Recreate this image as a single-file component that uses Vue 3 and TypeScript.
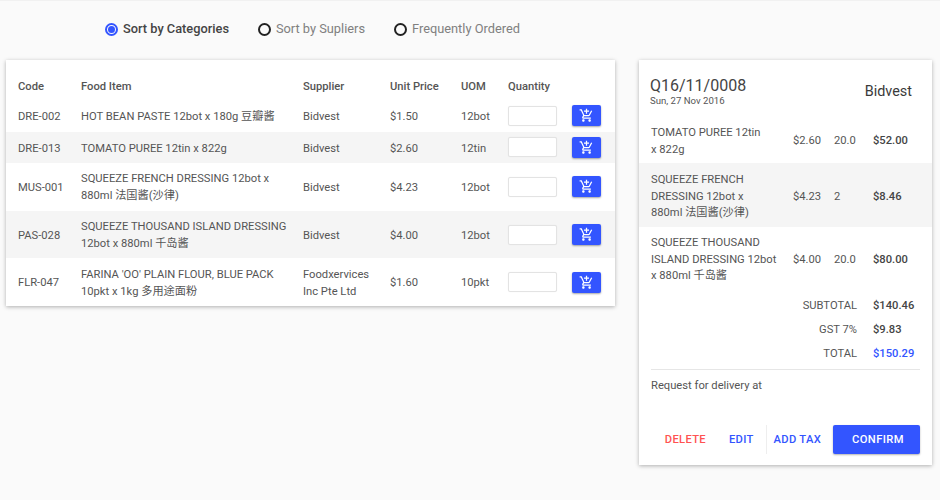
<script setup lang="ts">
interface Row { code: string; name: string[]; supplier: string[]; price: string; uom: string }
const rows: Row[] = [
  { code: 'DRE-002', name: ['HOT BEAN PASTE 12bot x 180g 豆瓣酱'], supplier: ['Bidvest'], price: '$1.50', uom: '12bot' },
  { code: 'DRE-013', name: ['TOMATO PUREE 12tin x 822g'], supplier: ['Bidvest'], price: '$2.60', uom: '12tin' },
  { code: 'MUS-001', name: ['SQUEEZE FRENCH DRESSING 12bot x', '880ml 法国酱(沙律)'], supplier: ['Bidvest'], price: '$4.23', uom: '12bot' },
  { code: 'PAS-028', name: ['SQUEEZE THOUSAND ISLAND DRESSING', '12bot x 880ml 千岛酱'], supplier: ['Bidvest'], price: '$4.00', uom: '12bot' },
  { code: 'FLR-047', name: ['FARINA \'OO\' PLAIN FLOUR, BLUE PACK', '10pkt x 1kg 多用途面粉'], supplier: ['Foodxervices', 'Inc Pte Ltd'], price: '$1.60', uom: '10pkt' },
]
const sorts = ['Sort by Categories', 'Sort by Supliers', 'Frequently Ordered']
const lines = [
  { name: ['TOMATO PUREE 12tin', 'x 822g'], price: '$2.60', qty: '20.0', total: '$52.00' },
  { name: ['SQUEEZE FRENCH', 'DRESSING 12bot x', '880ml 法国酱(沙律)'], price: '$4.23', qty: '2', total: '$8.46' },
  { name: ['SQUEEZE THOUSAND', 'ISLAND DRESSING 12bot', 'x 880ml 千岛酱'], price: '$4.00', qty: '20.0', total: '$80.00' },
]
</script>

<template>
  <div class="page">
    <div class="main">
      <div class="sorts">
        <label v-for="(s, i) in sorts" :key="s" class="sort" :class="{ on: i === 0 }">
          <span class="radio"><span v-if="i === 0" class="dot"></span></span>
          {{ s }}
        </label>
      </div>
      <div class="card table">
        <div class="row head">
          <span>Code</span><span>Food Item</span><span>Supplier</span><span>Unit Price</span><span>UOM</span><span>Quantity</span>
        </div>
        <div v-for="(r, i) in rows" :key="r.code" class="row" :class="{ alt: i % 2 === 1, tall: r.name.length > 1 }">
          <span class="cell">{{ r.code }}</span>
          <span class="cell"><span v-for="n in r.name" :key="n" class="ln">{{ n }}</span></span>
          <span class="cell"><span v-for="n in r.supplier" :key="n" class="ln">{{ n }}</span></span>
          <span class="cell">{{ r.price }}</span>
          <span class="cell">{{ r.uom }}</span>
          <span class="qty"></span>
          <button class="cart" type="button" aria-label="Add to cart">
            <svg width="15" height="15" viewBox="0 0 24 24" fill="#fff"><path d="M11 9h2V6h3V4h-3V1h-2v3H8v2h3v3zm-4 9c-1.1 0-1.99.9-1.99 2S5.9 22 7 22s2-.9 2-2-.9-2-2-2zm10 0c-1.1 0-1.99.9-1.99 2s.89 2 1.99 2 2-.9 2-2-.9-2-2-2zm-9.83-3.25l.03-.12.9-1.63h7.45c.75 0 1.41-.41 1.75-1.03l3.86-7.01L19.42 4h-.01l-1.1 2-2.76 5H8.53l-.13-.27L6.16 6l-.95-2-.94-2H1v2h2l3.6 7.59-1.35 2.45c-.16.28-.25.61-.25.96 0 1.1.9 2 2 2h12v-2H7.42c-.13 0-.25-.11-.25-.25z"/></svg>
          </button>
        </div>
      </div>
    </div>

    <div class="card order">
      <div class="ohead">
        <div>
          <div class="qnum">Q16/11/0008</div>
          <div class="date">Sun, 27 Nov 2016</div>
        </div>
        <div class="vendor">Bidvest</div>
      </div>
      <div v-for="(l, i) in lines" :key="l.total" class="oline" :class="'l' + i">
        <span><span v-for="n in l.name" :key="n" class="ln">{{ n }}</span></span>
        <span>{{ l.price }}</span>
        <span>{{ l.qty }}</span>
        <span class="strong">{{ l.total }}</span>
      </div>
      <div class="sums">
        <div class="sum"><span>SUBTOTAL</span><span class="strong">$140.46</span></div>
        <div class="sum"><span>GST 7%</span><span class="strong">$9.83</span></div>
        <div class="sum"><span>TOTAL</span><span class="strong blue">$150.29</span></div>
      </div>
      <div class="note">Request for delivery at</div>
      <div class="actions">
        <button class="act red" type="button">DELETE</button>
        <button class="act edit" type="button">EDIT</button>
        <span class="vr"></span>
        <button class="act tax" type="button">ADD TAX</button>
        <button class="confirm" type="button">CONFIRM</button>
      </div>
    </div>
  </div>
</template>

<style>
html, body { margin: 0; background: #fafafa; }
</style>

<style scoped>
.page {
  width: 940px; height: 500px; box-sizing: border-box; overflow: hidden;
  display: flex; align-items: flex-start; padding: 0 8px 0 6px; gap: 24px;
  background: #fafafa; border-top: 1px solid #f1f1f1;
  font: 400 11.2px "Roboto", "Noto Sans CJK SC", sans-serif; color: #555;
}
.main { width: 609px; flex: none; }
.sorts { display: flex; height: 59px; box-sizing: border-box; padding: 19px 0 0 99px; gap: 29px; }
.sort { display: flex; align-items: center; gap: 5px; height: 18px; font-size: 12.8px; color: #808080; line-height: 18px; }
.sort.on { color: #444; font-weight: 500; }
.radio { width: 9px; height: 9px; border: 2px solid #222; border-radius: 50%; display: flex; align-items: center; justify-content: center; flex: none; }
.on .radio { border-color: #3355ff; }
.dot { width: 7px; height: 7px; border-radius: 50%; background: #3355ff; }
.card { background: #fff; box-shadow: 0 1px 4px rgba(0,0,0,.3); }
.table { padding-top: 12px; }
.row {
  display: grid; grid-template-columns: 63px 222px 87px 71px 47px 64px 29px;
  align-items: center; padding-left: 12px; line-height: 17px; height: 31.6px;
}
.cell { padding-top: 1px; }
.row.alt:not(.tall) .cell { padding-top: 2px; }
.row.head { font-weight: 500; color: #555; height: 28px; }
.row.tall { height: 47.6px; }
.row.alt { background: #f5f5f5; }
.ln { display: block; }
.qty { width: 47px; height: 18px; background: #fff; border: 1px solid #e3e3e3; border-radius: 2px; box-shadow: 0 0 1px rgba(0,0,0,.08); }
.cart {
  width: 28.5px; height: 21px; padding: 0; border: 0; border-radius: 2px; background: #3355ff;
  box-shadow: 0 1px 2px rgba(0,0,0,.35); display: flex; align-items: center; justify-content: center;
}
.order { width: 293px; flex: none; margin-top: 59px; height: 405px; box-sizing: border-box; display: flex; flex-direction: column; }
.ohead { display: flex; justify-content: space-between; align-items: center; padding: 9px 20px 0 11px; height: 54px; box-sizing: border-box; }
.qnum { font-size: 16px; line-height: 18px; color: #444; }
.date { font-size: 9.6px; line-height: 11px; color: #555; }
.vendor { font-size: 14.4px; color: #3a3a3a; }
.oline { display: grid; grid-template-columns: 142px 41px 39px 1fr; align-items: center; line-height: 16.5px; }
.oline.l0 { padding: 11px 0 5px 12px; }
.oline.l1 { background: #f5f5f5; padding: 9px 0 5.5px 12px; }
.oline.l2 { padding: 8px 0 8.5px 12px; }
.strong { font-weight: 500; color: #444; }
.sums { margin: 0 12px; border-bottom: 1px solid #e6e6e6; padding-bottom: 4px; }
.sum { display: grid; grid-template-columns: 1fr 47px; column-gap: 16px; height: 24px; align-items: center; text-align: right; }
.sum .strong { text-align: left; }
.blue { color: #3355ff; }
.note { padding: 7px 12px 0; line-height: 17px; flex: 1; }
.actions { display: flex; align-items: center; justify-content: flex-end; padding: 0 12px 11px 0; height: 29px; }
.act { font: 500 11.2px "Roboto", sans-serif; letter-spacing: .3px; background: none; border: 0; padding: 0; color: #3355ff; height: 29px; }
.red { color: #ff5252; margin-right: 23px; }
.edit { margin-right: 12px; }
.vr { width: 1px; height: 29px; background: #eee; margin-right: 7px; }
.tax { margin-right: 12px; }
.confirm { width: 87px; height: 29px; padding: 0 0 0 3px; border: 0; border-radius: 2px; background: #3355ff; color: #fff; font: 500 11.2px "Roboto", sans-serif; letter-spacing: .4px; box-shadow: 0 1px 2px rgba(0,0,0,.3); }
</style>
